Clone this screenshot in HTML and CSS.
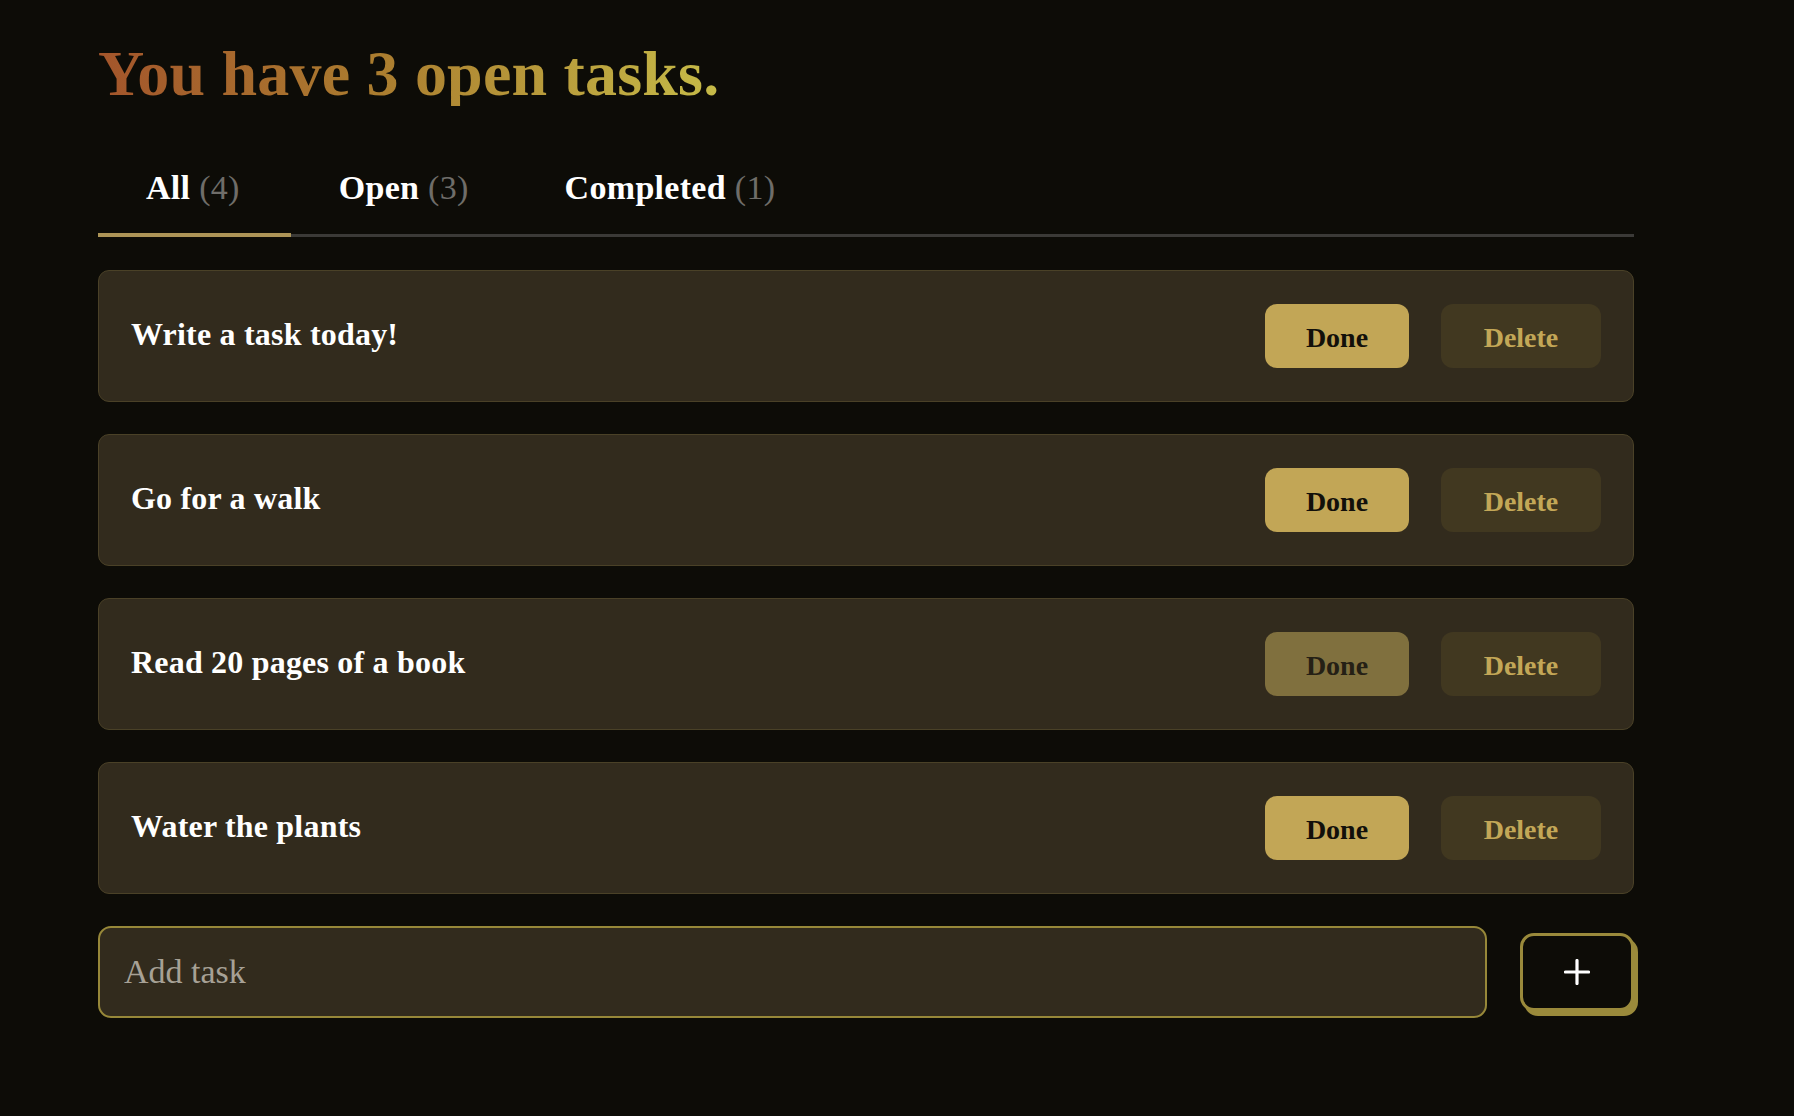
FILE: index.html
```html
<!DOCTYPE html>
<html lang="en">
<head>
<meta charset="utf-8">
<title>Tasks</title>
<link rel="stylesheet" href="styles.css">
</head>
<body>
<main class="app">
  <h1 class="title">You have 3 open tasks.</h1>
  <nav class="tabs">
    <div class="tab active">All <span class="count">(4)</span></div>
    <div class="tab">Open <span class="count">(3)</span></div>
    <div class="tab">Completed <span class="count">(1)</span></div>
  </nav>
  <ul class="list">
    <li class="card">
      <span class="task">Write a task today!</span>
      <div class="actions">
        <button class="btn btn-done">Done</button>
        <button class="btn btn-delete">Delete</button>
      </div>
    </li>
    <li class="card">
      <span class="task">Go for a walk</span>
      <div class="actions">
        <button class="btn btn-done">Done</button>
        <button class="btn btn-delete">Delete</button>
      </div>
    </li>
    <li class="card">
      <span class="task">Read 20 pages of a book</span>
      <div class="actions">
        <button class="btn btn-done is-complete">Done</button>
        <button class="btn btn-delete">Delete</button>
      </div>
    </li>
    <li class="card">
      <span class="task">Water the plants</span>
      <div class="actions">
        <button class="btn btn-done">Done</button>
        <button class="btn btn-delete">Delete</button>
      </div>
    </li>
  </ul>
  <form class="add-row">
    <input class="add-input" type="text" placeholder="Add task">
    <button class="add-btn" type="button" aria-label="Add">
      <svg width="26" height="26" viewBox="0 0 26 26"><path d="M13 1.5V24.5M1.5 13H24.5" stroke="#fff" stroke-width="3.2" stroke-linecap="round" fill="none"/></svg>
    </button>
  </form>
</main>
</body>
</html>
```

FILE: styles.css
```css
html, body {
  margin: 0;
  padding: 0;
  background: #0d0c07;
}
body {
  font-family: "Liberation Serif", "DejaVu Serif", serif;
  color: #fff;
}
.app {
  width: 1536px;
  padding: 42px 0 0 98px;
}
.title {
  margin: 0;
  display: inline-block;
  font-size: 64px;
  line-height: 64px;
  font-weight: 700;
  letter-spacing: 0.2px;
  background: linear-gradient(90deg, #a3552b 0%, #ab7d2f 45%, #c6bb48 100%);
  -webkit-background-clip: text;
  background-clip: text;
  color: transparent;
}
.tabs {
  display: flex;
  margin-top: 62px;
  border-bottom: 3px solid #3b3a37;
}
.tab {
  padding: 0 48px 25px;
  font-size: 34px;
  line-height: 40px;
  font-weight: 700;
  letter-spacing: 0.3px;
  color: #fff;
  border-bottom: 4px solid transparent;
  margin-bottom: -3px;
}
.tab.active {
  border-bottom-color: #ad9557;
  padding-right: 51px;
}
.count {
  font-weight: 400;
  color: #6f6d69;
}
.list {
  list-style: none;
  margin: 33px 0 0;
  padding: 0;
  display: flex;
  flex-direction: column;
  gap: 32px;
}
.card {
  display: flex;
  align-items: center;
  justify-content: space-between;
  padding: 33px 32px;
  background: #322b1d;
  border: 1px solid #4a4127;
  border-radius: 11px;
}
.task {
  font-size: 32px;
  font-weight: 700;
  color: #fff;
  padding-bottom: 4px;
  letter-spacing: 0.2px;
}
.actions {
  display: flex;
  gap: 32px;
}
.btn {
  height: 64px;
  border: none;
  border-radius: 12px;
  font-family: "Liberation Serif", "DejaVu Serif", serif;
  font-size: 28px;
  font-weight: 700;
  padding: 4px 0 0;
}
.btn-done {
  width: 144px;
  background: #c2a656;
  color: #12100a;
}
.btn-done.is-complete {
  background: #80703e;
  color: #252015;
}
.btn-delete {
  width: 160px;
  background: #413820;
  color: #c3a757;
}
.add-row {
  display: flex;
  align-items: center;
  gap: 33px;
  margin-top: 32px;
}
.add-input {
  box-sizing: border-box;
  width: 1389px;
  height: 92px;
  padding: 0 24px;
  background: #322b1d;
  border: 2px solid #978839;
  border-radius: 13px;
  font-family: "Liberation Serif", "DejaVu Serif", serif;
  font-size: 34px;
  color: #fff;
  outline: none;
}
.add-input::placeholder {
  color: #a7a196;
}
.add-btn {
  box-sizing: border-box;
  width: 114px;
  height: 78px;
  display: flex;
  align-items: center;
  justify-content: center;
  background: #0d0c07;
  border: 3px solid #9a8a3b;
  border-radius: 14px;
  box-shadow: 4px 5px 0 0 #9a8a3b;
  padding: 0;
}
```
